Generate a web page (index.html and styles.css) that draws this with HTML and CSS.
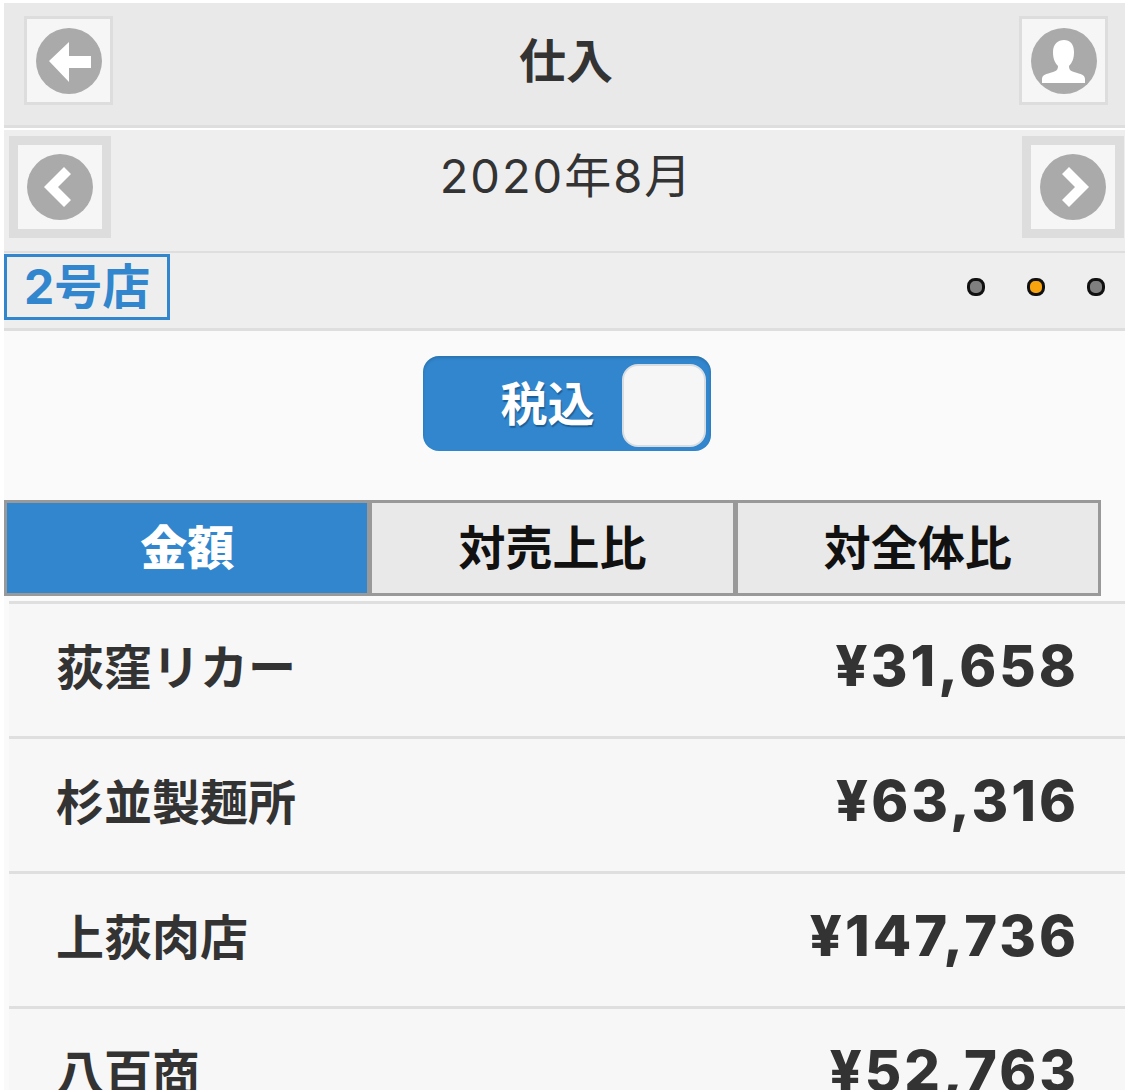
FILE: index.html
```html
<!DOCTYPE html>
<html lang="ja">
<head>
    <meta charset="UTF-8">
    <title>仕入</title>
    <link rel="stylesheet" href="styles.css">
</head>
<body>

<header class="title-bar">
    <a class="icon-btn">
        <svg class="icon" viewBox="0 0 66 66"><circle cx="33" cy="33" r="33" fill="#aaa"/><path d="M13 33 33 14V28H55V40H33V54Z" fill="#fff"/></svg>
    </a>
    <h1 class="page-title">仕入</h1>
    <a class="icon-btn">
        <svg class="icon" viewBox="0 0 66 66"><circle cx="33" cy="33" r="33" fill="#aaa"/><path d="M11 55V51C11 47 15 46 22 44 26 43 27 41 27 38 24 35 22 31 22 24 22 16 27 12 33 12 39 12 43 16 43 24 43 31 41 35 38 38 38 41 39 43 43 44 50 46 54 47 54 51V55Z" fill="#fff"/></svg>
    </a>
</header>

<nav class="month-bar">
    <a class="month-btn">
        <svg class="icon" viewBox="0 0 66 66"><circle cx="33" cy="33" r="33" fill="#aaa"/><path d="M37 13 44 20 31 33 44 46 37 53 17 33Z" fill="#fff"/></svg>
    </a>
    <div class="month-label">2020年8月</div>
    <a class="month-btn">
        <svg class="icon" viewBox="0 0 66 66"><circle cx="33" cy="33" r="33" fill="#aaa"/><path d="M29 13 22 20 35 33 22 46 29 53 49 33Z" fill="#fff"/></svg>
    </a>
</nav>

<div class="store-bar">
    <div class="store-name">2号店</div>
    <div class="dots">
        <span class="dot"></span>
        <span class="dot active"></span>
        <span class="dot"></span>
    </div>
</div>

<main class="content">
    <div class="toggle-wrap">
        <div class="toggle">
            <span class="toggle-text">税込</span>
            <span class="toggle-knob"></span>
        </div>
    </div>

    <div class="tabs">
        <div class="tab active">金額</div>
        <div class="tab">対売上比</div>
        <div class="tab">対全体比</div>
    </div>

    <ul class="list">
        <li><span>荻窪リカー</span><span class="amount">¥31,658</span></li>
        <li><span>杉並製麺所</span><span class="amount">¥63,316</span></li>
        <li><span>上荻肉店</span><span class="amount">¥147,736</span></li>
        <li><span>八百商</span><span class="amount">¥52,763</span></li>
    </ul>
</main>

</body>
</html>
```

FILE: styles.css
```css
html {
    background: #fff;
}
body {
    font-family: Inter, "Noto Sans CJK JP", sans-serif;
    color: #333;
    margin: 0;
    padding: 3px 0 0 4px;
    height: 1090px;
    overflow: hidden;
    box-sizing: border-box;
}
.icon {
    display: block;
    width: 66px;
    height: 66px;
}
.title-bar {
    height: 125px;
    background: #e9e9e9;
    border-bottom: 3px solid #dedede;
    margin-bottom: 2px;
    padding: 13px 17px 0 20px;
    box-sizing: border-box;
    display: flex;
    justify-content: space-between;
}
.icon-btn {
    width: 89px;
    height: 89px;
    box-sizing: border-box;
    border: 3px solid #ddd;
    background: #f6f6f6;
    display: flex;
    align-items: center;
    justify-content: center;
}
.page-title {
    margin: 0;
    font-size: 47px;
    font-weight: 700;
    line-height: 90px;
}
.month-bar {
    height: 123px;
    background: #eee;
    border-bottom: 2px solid #dedede;
    padding: 6px 1px 0 5px;
    box-sizing: border-box;
    display: flex;
    justify-content: space-between;
}
.month-btn {
    width: 102px;
    height: 102px;
    box-sizing: border-box;
    border: 9px solid #ddd;
    background: #f6f6f6;
    display: flex;
    align-items: center;
    justify-content: center;
}
.month-label {
    font-size: 47px;
    line-height: 80px;
    letter-spacing: 2px;
}
.store-bar {
    height: 75px;
    background: #eee;
    border-bottom: 3px solid #dedede;
    box-sizing: content-box;
    display: flex;
    justify-content: space-between;
    align-items: flex-start;
}
.store-name {
    color: #3186cd;
    border: 3px solid #3186cd;
    font-size: 48px;
    font-weight: 700;
    line-height: 60px;
    padding: 0 17px;
    margin-top: 1px;
}
.dots {
    display: flex;
    gap: 42px;
    margin: 25px 20px 0 0;
}
.dot {
    width: 18px;
    height: 18px;
    box-sizing: border-box;
    border: 3px solid #111;
    border-radius: 8px;
    background: #808080;
}
.dot.active {
    background: #f9a30f;
}
.content {
    background: #fafafa;
}
.toggle-wrap {
    padding-top: 25px;
    height: 169px;
    box-sizing: border-box;
    display: flex;
    justify-content: center;
}
.toggle {
    width: 288px;
    height: 95px;
    margin-left: 4px;
    box-sizing: border-box;
    background: #3186cd;
    border-radius: 16px;
    padding: 8px 5px 0 0;
    display: flex;
    justify-content: flex-end;
    box-shadow: inset 0 2px 3px rgba(0, 0, 0, 0.15);
}
.toggle-text {
    color: #fff;
    font-size: 47px;
    font-weight: 700;
    line-height: 80px;
    margin-right: 27px;
    text-shadow: 1px 2px 1px #1d5f97;
}
.toggle-knob {
    width: 84px;
    height: 83px;
    box-sizing: border-box;
    background: #f6f6f6;
    border: 2px solid #d8dde2;
    border-radius: 16px;
}
.tabs {
    width: 1097px;
    height: 96px;
    display: flex;
}
.tab {
    flex: 1;
    box-sizing: border-box;
    border: 3px solid #999;
    margin-left: -1px;
    background: #e9e9e9;
    color: #111;
    font-size: 47px;
    font-weight: 700;
    line-height: 90px;
    text-align: center;
}
.tab.active {
    background: #3186cd;
    color: #fff;
    font-weight: 900;
    margin-left: 0;
}
.list {
    list-style: none;
    margin: 5px 0 0 5px;
    padding: 0;
}
.list li {
    height: 135px;
    box-sizing: border-box;
    background: #f7f7f7;
    border-top: 3px solid #dfdfdf;
    padding: 0 46px 12px 47px;
    display: flex;
    justify-content: space-between;
    align-items: center;
    font-size: 48px;
    font-weight: 700;
}
.amount {
    font-size: 56px;
    font-weight: 800;
    letter-spacing: 3px;
    margin-top: 4px;
}
```
